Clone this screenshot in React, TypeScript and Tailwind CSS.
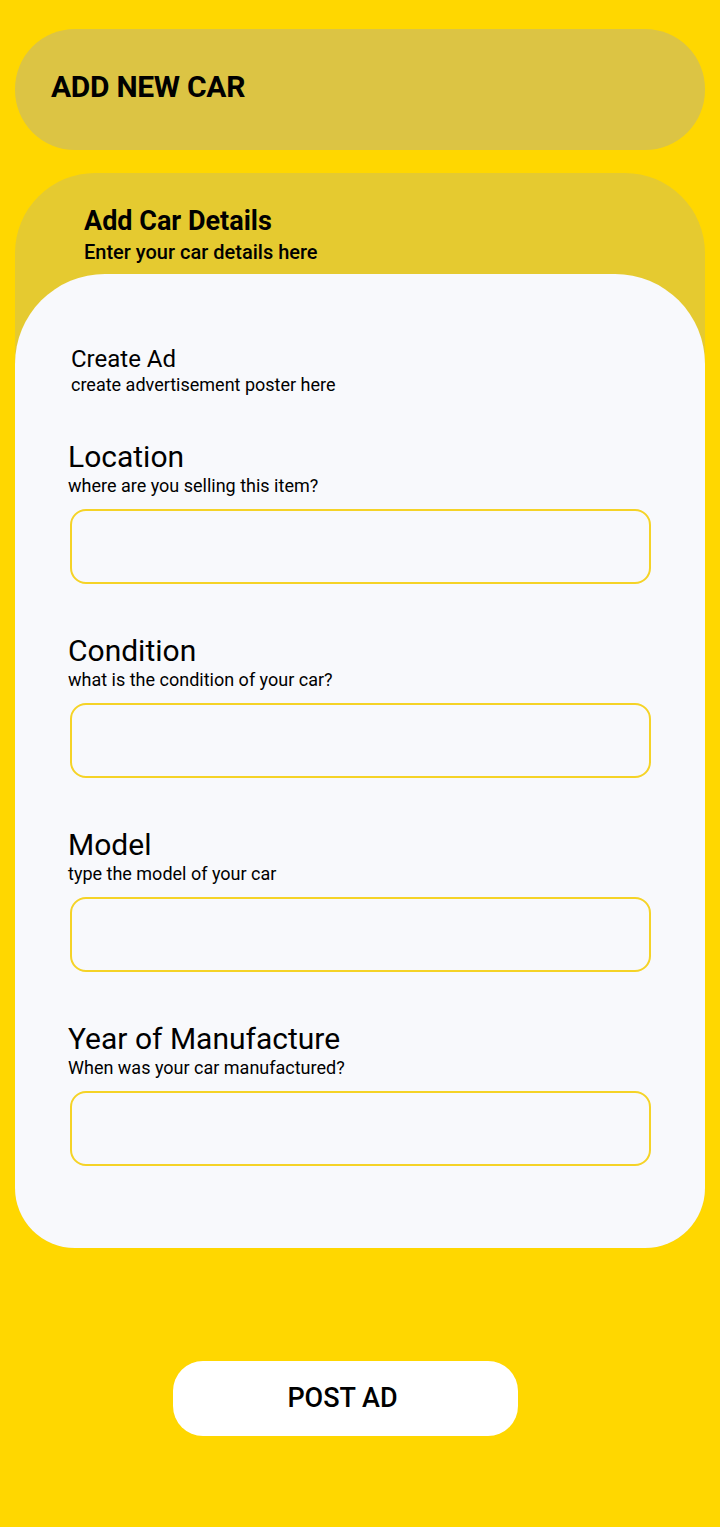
import React from 'react';

const fields = [
  { label: 'Location', hint: 'where are you selling this item?' },
  { label: 'Condition', hint: 'what is the condition of your car?' },
  { label: 'Model', hint: 'type the model of your car' },
  { label: 'Year of Manufacture', hint: 'When was your car manufactured?' },
];

function Field({ label, hint }: { label: string; hint: string }) {
  return (
    <div className="flex flex-col">
      <h3 className="ml-[53px] text-[30px] leading-[34px] font-normal text-black">{label}</h3>
      <p className="ml-[53px] mt-[2px] text-[18px] leading-[20px] text-black">{hint}</p>
      <input
        type="text"
        className="ml-[55px] mt-[13px] h-[75px] w-[581px] rounded-[16px] border-2 border-[#f5d327] bg-transparent px-4 outline-none"
      />
    </div>
  );
}

export default function App() {
  return (
    <div className="min-h-[1527px] bg-[#ffd700] pt-[29px] font-['Roboto',sans-serif]">
      <div className="mx-[15px] flex h-[121px] items-center rounded-[60px] bg-[#dcc444] pb-[5px] pl-[36px]">
        <h1 className="text-[30px] leading-none font-bold tracking-[-0.3px] text-black">ADD NEW CAR</h1>
      </div>

      <div className="mx-[15px] mt-[23px] flex flex-col rounded-t-[80px] rounded-b-[60px] bg-[#e5ca30]">
        <div className="h-[101px] pl-[69px] pt-[33px]">
          <h2 className="text-[27px] leading-[30px] font-bold text-black">Add Car Details</h2>
          <p className="mt-[4px] text-[20px] leading-[24px] font-medium text-black">Enter your car details here</p>
        </div>

        <div className="flex h-[974px] flex-col rounded-t-[90px] rounded-b-[60px] bg-[#f8f9fc] pt-[71px]">
          <div className="ml-[56px]">
            <h2 className="text-[24px] leading-[28px] font-[450] text-black">Create Ad</h2>
            <p className="mt-[2px] text-[18px] leading-[20px] text-black">create advertisement poster here</p>
          </div>

          <div className="mt-[45px] flex flex-col gap-[50px]">
            {fields.map((f) => (
              <Field key={f.label} label={f.label} hint={f.hint} />
            ))}
          </div>
        </div>
      </div>

      <div className="mt-[113px] flex justify-center">
        <button
          type="button"
          className="ml-[-29px] h-[75px] w-[345px] rounded-[30px] bg-white pr-[6px] text-[27px] font-medium text-black"
        >
          POST AD
        </button>
      </div>
    </div>
  );
}
